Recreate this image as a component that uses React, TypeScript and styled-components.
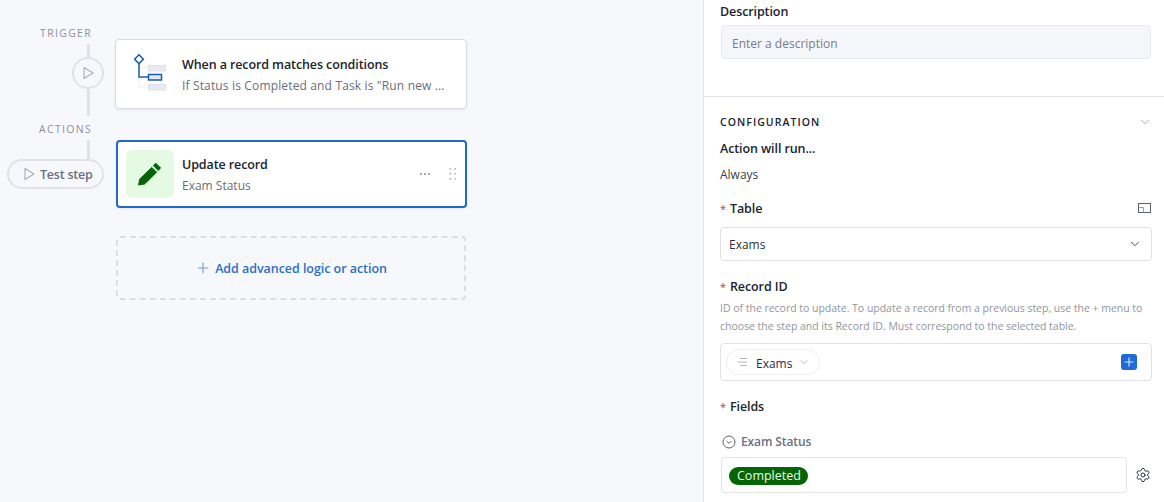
import React from "react";
import styled, { createGlobalStyle } from "styled-components";
import { ChevronDown, Plus, Settings } from "lucide-react";

const GlobalStyle = createGlobalStyle`
  html, body {
    margin: 0;
    padding: 0;
    height: 100%;
    overflow: hidden;
    font-family: "Open Sans", "Noto Sans", sans-serif;
    color: #1f2430;
  }
  #root { height: 100%; }
`;

const Page = styled.div`
  display: flex;
  height: 502px;
  width: 1164px;
  overflow: hidden;
`;

const Canvas = styled.div`
  width: 703px;
  flex: none;
  display: flex;
  background: #f6f8fc;
`;

const Rail = styled.div`
  width: 115px;
  flex: none;
  box-sizing: border-box;
  padding: 25px 11px 0 7px;
  display: flex;
  flex-direction: column;
  align-items: flex-end;
`;

const RailLabel = styled.div<{ $top?: number }>`
  font-size: 10.5px;
  line-height: 16px;
  letter-spacing: 1.3px;
  color: #8d919b;
  margin-right: 12px;
  margin-top: ${(p) => p.$top ?? 0}px;
`;

const Connector = styled.div<{ $h: number; $top?: number }>`
  width: 3px;
  height: ${(p) => p.$h}px;
  margin-top: ${(p) => p.$top ?? 0}px;
  margin-right: 14px;
  background: #dfe1e6;
`;

const PlayCircle = styled.div`
  width: 32px;
  height: 32px;
  box-sizing: border-box;
  border: 2px solid #e0e2e7;
  border-radius: 50%;
  display: flex;
  align-items: center;
  justify-content: center;
`;

const TestPill = styled.div`
  width: 97px;
  height: 30px;
  box-sizing: border-box;
  border: 2px solid #e0e2e7;
  border-radius: 15px;
  display: flex;
  align-items: center;
  gap: 4px;
  padding-left: 13px;
  font-size: 12.5px;
  font-weight: 600;
  letter-spacing: -0.22px;
  color: #6b7080;
  white-space: nowrap;
`;

const Flow = styled.div`
  width: 352px;
  padding-top: 39px;
  display: flex;
  flex-direction: column;
`;

const Card = styled.div<{ $active?: boolean }>`
  box-sizing: border-box;
  height: ${(p) => (p.$active ? 68 : 70)}px;
  margin-left: ${(p) => (p.$active ? 1 : 0)}px;
  margin-top: ${(p) => (p.$active ? 31 : 0)}px;
  background: #fff;
  border: ${(p) => (p.$active ? "2px solid #1f6ac9" : "1px solid #d9dbe1")};
  border-radius: 4px;
  display: flex;
  align-items: center;
  padding-left: ${(p) => (p.$active ? 8 : 18)}px;
  box-shadow: 0 1px 2px rgba(30, 40, 70, 0.08);
`;

const GreenTile = styled.div`
  width: 48px;
  height: 48px;
  flex: none;
  border-radius: 6px;
  background: #e4fae3;
  display: flex;
  align-items: center;
  justify-content: center;
`;

const CardText = styled.div<{ $left: number }>`
  margin-left: ${(p) => p.$left}px;
  padding-top: 2px;
  flex: 1;
  min-width: 0;
`;

const CardTitle = styled.div`
  font-size: 12.5px;
  font-weight: 600;
  line-height: 22px;
  height: 20px;
  letter-spacing: -0.1px;
  color: #20242e;
`;

const CardSub = styled.div<{ $track?: number }>`
  font-size: 12px;
  line-height: 20px;
  margin-top: 2px;
  letter-spacing: ${(p) => p.$track ?? 0}px;
  color: #6a6e78;
  white-space: nowrap;
`;

const CardTools = styled.div`
  display: flex;
  align-items: center;
  gap: 18px;
  padding-right: 8px;
`;

const AddBox = styled.div`
  box-sizing: border-box;
  margin: 28px 1px 0 1px;
  width: 350px;
  height: 64px;
  border: 2px dashed #dcdee3;
  border-radius: 4px;
  display: flex;
  align-items: center;
  justify-content: center;
  gap: 4px;
  font-size: 12.5px;
  font-weight: 600;
  letter-spacing: -0.05px;
  color: #2a6fc9;
`;

const Panel = styled.div`
  flex: 1;
  background: #fff;
  border-left: 1px solid #e3e5ea;
`;

const Section = styled.div`
  padding: 0 12px 0 16px;
`;

const Label = styled.div<{ $top?: number }>`
  box-sizing: border-box;
  height: 20px;
  padding-top: 2px;
  font-size: 12.5px;
  font-weight: 600;
  line-height: 18px;
  letter-spacing: -0.1px;
  color: #20242e;
  margin-top: ${(p) => p.$top ?? 0}px;
  display: flex;
  align-items: center;
`;

const Star = styled.span`
  color: #b03a5b;
  font-weight: 400;
  margin-right: 4px;
  font-size: 11px;
`;

const DescInput = styled.div`
  box-sizing: border-box;
  margin: 4px 1px 0;
  height: 34px;
  background: #f5f6fa;
  border: 1px solid #e6e8ee;
  border-radius: 4px;
  display: flex;
  align-items: center;
  padding: 2px 0 0 10px;
  font-size: 12px;
  color: #797d87;
`;

const Divider = styled.div`
  height: 1px;
  background: #e3e5ea;
  margin-top: 37px;
`;

const SectionHead = styled.div`
  margin-top: 15px;
  display: flex;
  align-items: center;
  justify-content: space-between;
  font-size: 10.5px;
  font-weight: 600;
  line-height: 20px;
  letter-spacing: 1.05px;
  color: #20242e;
`;

const Plain = styled.div`
  font-size: 12px;
  line-height: 22px;
  height: 20px;
  margin-top: 6px;
  color: #3a3e48;
`;

const SpreadRow = styled.div`
  margin-top: 14px;
  padding-right: 1px;
  display: flex;
  align-items: center;
  justify-content: space-between;
`;

const Select = styled.div`
  box-sizing: border-box;
  margin-top: 9px;
  height: 34px;
  border: 1px solid #e0e2e7;
  border-radius: 4px;
  display: flex;
  align-items: center;
  justify-content: space-between;
  padding: 0 9px 0 8px;
  font-size: 12px;
  color: #2c303a;
`;

const Help = styled.div`
  margin-top: 3px;
  font-size: 10.5px;
  line-height: 18px;
  letter-spacing: -0.02px;
  color: #92959d;
  white-space: nowrap;
`;

const TokenBox = styled.div`
  box-sizing: border-box;
  margin-top: 8px;
  height: 38px;
  border: 1px solid #e0e2e7;
  border-radius: 4px;
  display: flex;
  align-items: center;
  justify-content: space-between;
  padding: 0 14px 0 5px;
`;

const Token = styled.div`
  box-sizing: border-box;
  width: 94px;
  height: 26px;
  border: 1px solid #eceef2;
  border-radius: 13px;
  display: flex;
  align-items: center;
  padding-left: 10px;
  font-size: 12px;
  line-height: 20px;
  color: #2c303a;
`;

const TokenLabel = styled.span`
  padding-top: 3px;
  margin: 0 6px 0 8px;
`;

const BluePlus = styled.div`
  width: 16px;
  height: 16px;
  border-radius: 3px;
  background: #1f6ad6;
  display: flex;
  align-items: center;
  justify-content: center;
`;

const FieldHead = styled.div`
  box-sizing: border-box;
  margin-top: 15px;
  display: flex;
  align-items: center;
  gap: 5px;
  padding: 2px 0 0 2px;
  font-size: 12px;
  font-weight: 600;
  line-height: 18px;
  height: 20px;
  letter-spacing: -0.1px;
  color: #6b7080;
`;

const FieldRow = styled.div`
  margin-top: 6px;
  display: flex;
  align-items: center;
`;

const FieldBox = styled.div`
  box-sizing: border-box;
  margin-left: 1px;
  width: 406px;
  height: 36px;
  border: 1px solid #e3e5ea;
  border-radius: 4px;
  display: flex;
  align-items: center;
  padding: 2px 0 0 7px;
`;

const Badge = styled.span`
  height: 18px;
  border-radius: 9px;
  background: #056405;
  color: #e8fbe6;
  font-size: 12.5px;
  line-height: 18px;
  padding: 0 7px 0 8px;
`;

const GearSlot = styled.div`
  margin-left: 8px;
  display: flex;
`;

const PlayGlyph = ({ size = 14, color = "#a9acb5" }: { size?: number; color?: string }) => (
  <svg width={size} height={size} viewBox="0 0 14 14" fill="none" style={{ flex: "none" }}>
    <path d="M3 1.5 L12 7 L3 12.5 Z" stroke={color} strokeWidth="1.1" strokeLinejoin="round" />
  </svg>
);

const DiagramIcon = () => (
  <svg width="34" height="40" viewBox="0 0 34 40" fill="none" style={{ flex: "none" }}>
    <path d="M5 10 V33 H13" stroke="#eef0f4" strokeWidth="1" />
    <path d="M5 14 H13" stroke="#eef0f4" strokeWidth="1" />
    <rect x="14.5" y="11.5" width="17" height="5.5" fill="#e8eaf0" stroke="#dfe2ea" />
    <rect x="14.5" y="30.5" width="17" height="5.5" fill="#e8eaf0" stroke="#dfe2ea" />
    <path d="M5 10 V23 H14" stroke="#1f5ca8" strokeWidth="1.5" />
    <rect x="14.5" y="20.5" width="13" height="5.5" fill="#dce8f6" stroke="#1f5ca8" strokeWidth="1.5" />
    <path d="M5 0.8 L9.4 5.2 L5 9.6 L0.6 5.2 Z" fill="#fff" stroke="#1f5ca8" strokeWidth="1.5" />
  </svg>
);

const PencilIcon = () => (
  <svg width="26" height="26" viewBox="0 0 26 26">
    <path d="M1.5 24 L2.8 18 L14.8 6.4 L19.6 11.2 L7.6 23 Z" fill="#056405" strokeLinejoin="round" stroke="#056405" strokeWidth="1" />
    <path d="M16.4 4.6 L18.8 2.2 L23.6 7 L21.2 9.4 Z" fill="#056405" stroke="#056405" strokeWidth="1" strokeLinejoin="round" />
  </svg>
);

const DotsIcon = () => (
  <svg width="12" height="4" viewBox="0 0 12 4" fill="#8d9099">
    <circle cx="2" cy="2" r="1" />
    <circle cx="6" cy="2" r="1" />
    <circle cx="10" cy="2" r="1" />
  </svg>
);

const GripIcon = () => (
  <svg width="8" height="12" viewBox="0 0 8 12" fill="#b4b7be">
    {[1, 6, 11].map((y) => (
      <React.Fragment key={y}>
        <rect x="0.5" y={y - 1} width="1.6" height="1.6" />
        <rect x="5.5" y={y - 1} width="1.6" height="1.6" />
      </React.Fragment>
    ))}
  </svg>
);

const PanelSizeIcon = () => (
  <svg width="13" height="11" viewBox="0 0 13 11" fill="none" stroke="#5d616b" strokeWidth="1">
    <rect x="0.5" y="0.5" width="12" height="9" />
    <path d="M0.5 4.5 H5.5 V9.5" stroke="#9a9da5" />
  </svg>
);

const FieldListIcon = () => (
  <svg width="11" height="10" viewBox="0 0 11 10" fill="none" stroke="#b5b8bf" strokeWidth="1" style={{ flex: "none" }}>
    <path d="M3 1.5 H10 M0.5 5 H10 M3 8.5 H10" />
  </svg>
);

const CircleChevron = () => (
  <svg width="14" height="14" viewBox="0 0 14 14" fill="none" stroke="#5d616b" strokeWidth="1" style={{ flex: "none" }}>
    <circle cx="7" cy="7" r="6" />
    <path d="M4.6 6 L7 8.4 L9.4 6" />
  </svg>
);

export default function App() {
  return (
    <Page>
      <GlobalStyle />
      <Canvas>
        <Rail>
          <RailLabel>TRIGGER</RailLabel>
          <Connector $h={13} $top={3} />
          <PlayCircle>
            <PlayGlyph />
          </PlayCircle>
          <Connector $h={27} />
          <RailLabel $top={5}>ACTIONS</RailLabel>
          <Connector $h={19} $top={3} />
          <TestPill>
            <PlayGlyph />
            Test step
          </TestPill>
        </Rail>
        <Flow>
          <Card>
            <DiagramIcon />
            <CardText $left={14}>
              <CardTitle>When a record matches conditions</CardTitle>
              <CardSub $track={0.15}>If Status is Completed and Task is "Run new ...</CardSub>
            </CardText>
          </Card>
          <Card $active>
            <GreenTile>
              <PencilIcon />
            </GreenTile>
            <CardText $left={8}>
              <CardTitle>Update record</CardTitle>
              <CardSub>Exam Status</CardSub>
            </CardText>
            <CardTools>
              <DotsIcon />
              <GripIcon />
            </CardTools>
          </Card>
          <AddBox>
            <Plus size={16} color="#6b9bdc" strokeWidth={1.6} />
            Add advanced logic or action
          </AddBox>
        </Flow>
      </Canvas>
      <Panel>
        <Section>
          <Label $top={1}>Description</Label>
          <DescInput>Enter a description</DescInput>
        </Section>
        <Divider />
        <Section>
          <SectionHead>
            CONFIGURATION
            <ChevronDown size={14} color="#7d818a" strokeWidth={1.2} />
          </SectionHead>
          <Label $top={6}>Action will run...</Label>
          <Plain>Always</Plain>
          <SpreadRow>
            <Label>
              <Star>*</Star>Table
            </Label>
            <PanelSizeIcon />
          </SpreadRow>
          <Select>
            Exams
            <ChevronDown size={14} color="#30343e" strokeWidth={1.5} />
          </Select>
          <Label $top={15}>
            <Star>*</Star>Record ID
          </Label>
          <Help>
            ID of the record to update. To update a record from a previous step, use the + menu to
            <br />
            choose the step and its Record ID. Must correspond to the selected table.
          </Help>
          <TokenBox>
            <Token>
              <FieldListIcon />
              <TokenLabel>Exams</TokenLabel>
              <ChevronDown size={12} color="#8d9099" strokeWidth={1.2} />
            </Token>
            <BluePlus>
              <Plus size={14} color="#cfe0fa" strokeWidth={2} />
            </BluePlus>
          </TokenBox>
          <Label $top={15}>
            <Star>*</Star>Fields
          </Label>
          <FieldHead>
            <CircleChevron />
            Exam Status
          </FieldHead>
          <FieldRow>
            <FieldBox>
              <Badge>Completed</Badge>
            </FieldBox>
            <GearSlot>
              <Settings size={16} color="#30343e" strokeWidth={1.5} />
            </GearSlot>
          </FieldRow>
        </Section>
      </Panel>
    </Page>
  );
}
